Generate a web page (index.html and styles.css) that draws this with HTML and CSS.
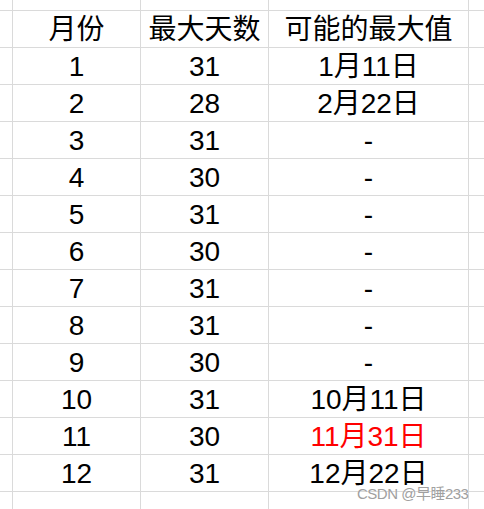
FILE: index.html
```html
<!DOCTYPE html>
<html>
<head>
<meta charset="utf-8">
<link rel="stylesheet" href="styles.css">
</head>
<body>
<div class="sheet">
  <div class="c"></div><div class="c"></div><div class="c"></div><div class="c"></div><div class="c"></div>

  <div class="c"></div><div class="c t">月份</div><div class="c t">最大天数</div><div class="c t">可能的最大值</div><div class="c"></div>
  <div class="c"></div><div class="c t">1</div><div class="c t">31</div><div class="c t">1月11日</div><div class="c"></div>
  <div class="c"></div><div class="c t">2</div><div class="c t">28</div><div class="c t">2月22日</div><div class="c"></div>
  <div class="c"></div><div class="c t">3</div><div class="c t">31</div><div class="c t">-</div><div class="c"></div>
  <div class="c"></div><div class="c t">4</div><div class="c t">30</div><div class="c t">-</div><div class="c"></div>
  <div class="c"></div><div class="c t">5</div><div class="c t">31</div><div class="c t">-</div><div class="c"></div>
  <div class="c"></div><div class="c t">6</div><div class="c t">30</div><div class="c t">-</div><div class="c"></div>
  <div class="c"></div><div class="c t">7</div><div class="c t">31</div><div class="c t">-</div><div class="c"></div>
  <div class="c"></div><div class="c t">8</div><div class="c t">31</div><div class="c t">-</div><div class="c"></div>
  <div class="c"></div><div class="c t">9</div><div class="c t">30</div><div class="c t">-</div><div class="c"></div>
  <div class="c"></div><div class="c t">10</div><div class="c t">31</div><div class="c t">10月11日</div><div class="c"></div>
  <div class="c"></div><div class="c t">11</div><div class="c t">30</div><div class="c t red">11月31日</div><div class="c"></div>
  <div class="c"></div><div class="c t">12</div><div class="c t">31</div><div class="c t">12月22日</div><div class="c"></div>

  <div class="c"></div><div class="c"></div><div class="c"></div><div class="c"></div><div class="c"></div>
</div>
<div class="watermark">CSDN @早睡233</div>
</body>
</html>
```
FILE: styles.css
```css
html, body {
  margin: 0;
  padding: 0;
  background: #ffffff;
}
body {
  width: 484px;
  height: 509px;
  overflow: hidden;
  position: relative;
  font-family: "Liberation Sans", "Noto Sans CJK SC", sans-serif;
}
.sheet {
  display: grid;
  grid-template-columns: 12px 127px 127px 199px 15px;
  grid-template-rows: 10px repeat(13, 36px) 17px;
  gap: 1px;
  background: #dadada;
  height: 509px;
}
.c {
  background: #ffffff;
}
.t {
  font-size: 28px;
  line-height: 36px;
  padding-top: 1px;
  text-align: center;
  color: #000000;
  white-space: nowrap;
  overflow: visible;
}
.red {
  color: #ff0000;
}
.watermark {
  position: absolute;
  left: 357px;
  top: 484px;
  font-size: 15px;
  line-height: 20px;
  letter-spacing: -0.5px;
  color: #a0a0a0;
  text-shadow: 0 0 1px rgba(255,255,255,0.8);
  white-space: nowrap;
}
```
